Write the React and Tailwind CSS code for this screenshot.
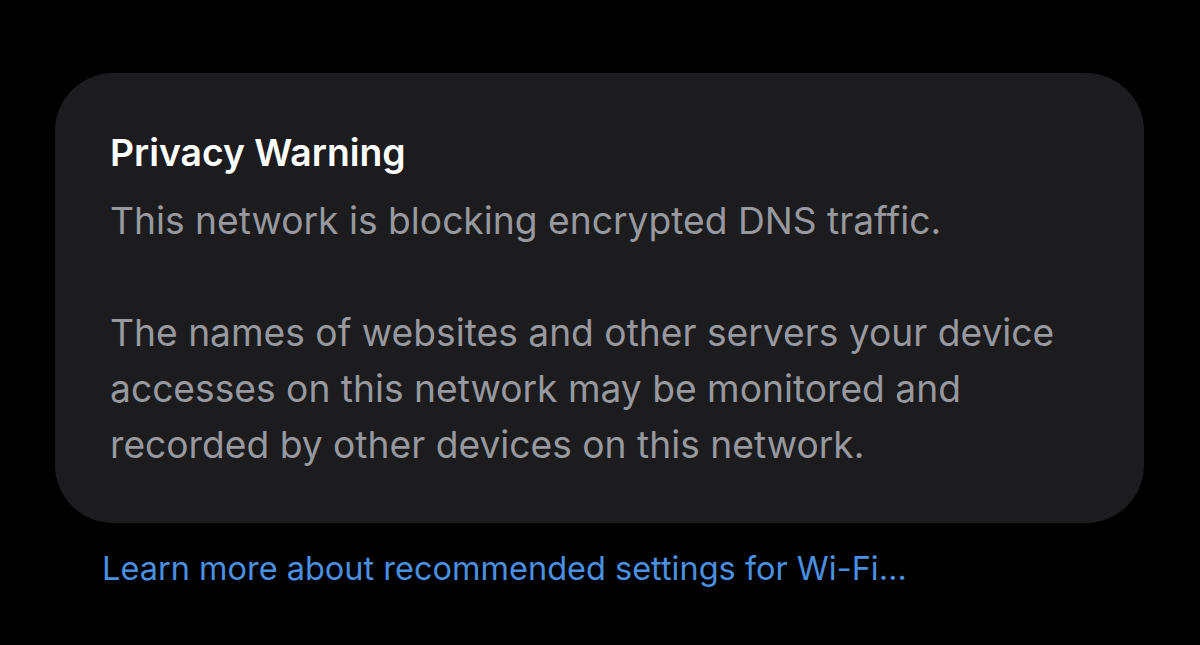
import React from 'react';

export default function App() {
  return (
    <div className="min-h-[645px] w-[1200px] bg-black pt-[73px] pl-[55px]" style={{ fontFamily: 'Inter, "Noto Sans", sans-serif' }}>
      <div className="w-[1089px] h-[450px] rounded-[58px] bg-[#1c1c1e] pl-[55px] pt-[60px]">
        <h2 className="text-[37.3px] leading-[40px] font-semibold text-white">Privacy Warning</h2>
        <p className="mt-[20px] text-[37.2px] leading-[56px] text-[#98989f]">
          This network is blocking encrypted DNS traffic.
        </p>
        <p className="mt-[56px] text-[37.2px] leading-[56px] text-[#98989f] w-[980px]">
          The names of websites and other servers your device accesses on this network may be monitored and recorded by other devices on this network.
        </p>
      </div>
      <a href="#" className="mt-[26px] ml-[47px] block text-[32.5px] leading-[40px] text-[#4a90e2]">
        Learn more about recommended settings for Wi-Fi…
      </a>
    </div>
  );
}
